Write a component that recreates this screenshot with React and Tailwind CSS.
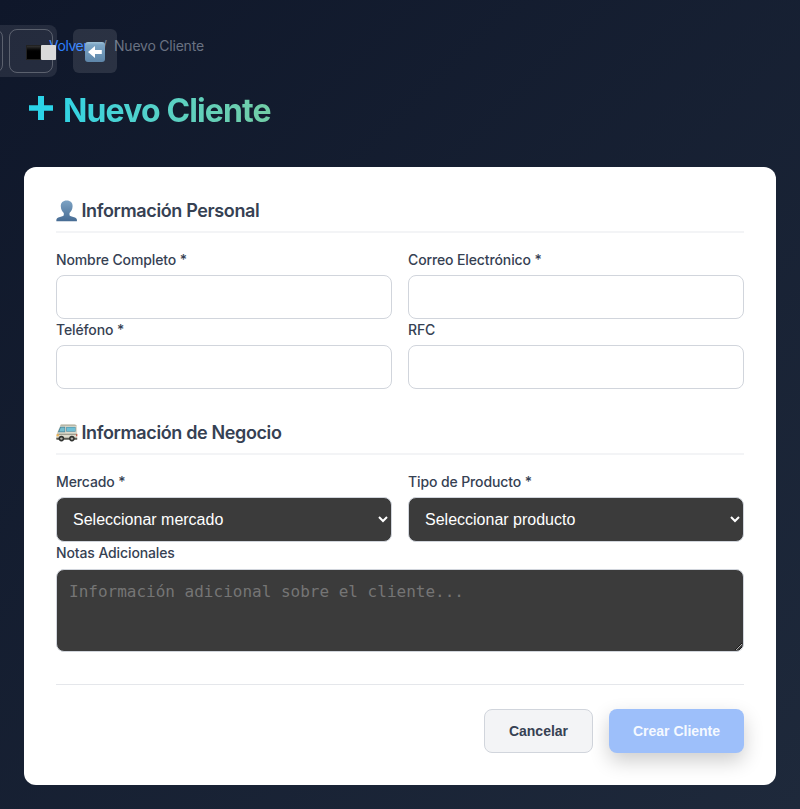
import React from "react";

function PersonIcon() {
  return (
    <svg className="mt-px block h-[22px] w-[22px]" viewBox="0 0 22 22">
      <defs>
        <linearGradient id="person" x1="0" y1="0" x2="0" y2="1">
          <stop offset="0" stopColor="#7da3c4" />
          <stop offset="1" stopColor="#466b93" />
        </linearGradient>
      </defs>
      <path
        fill="url(#person)"
        d="M10.700 .5c3.800 0 6 2.300 5.900 5.700-.1 3-1.500 5.500-3.100 6.800v1.700c0 .8.5 1.200 1.500 1.500 3.500.9 5.300 1.500 5.800 3 .2.600.2 1.500.1 2.100H.4c-.1-.6-.1-1.500.1-2.100.5-1.500 2.300-2.100 5.800-3 1-.3 1.500-.7 1.500-1.500V13C6.200 11.700 4.900 9.200 4.800 6.200 4.700 2.800 6.900.5 10.700.5z"
      />
    </svg>
  );
}

function VanIcon() {
  return (
    <svg className="mt-px block h-[22px] w-[22px]" viewBox="0 0 22 22">
      <path d="M4.700 2.500h13.500c1.900 0 2.700.9 2.800 2.400l.3 12.300H1c-.7 0-.8-.5-.7-1.500.1-2.600.6-5.100 1.500-6.600z" fill="#dddbcd" />
      <path d="M4.900 2.500h13.400c1.300 0 2 .5 2.400 1.500H4.200z" fill="#b9b7a7" />
      <path d="M4.200 4.800h5v5.500H1.900z" fill="#477f93" />
      <path d="M4.800 5.500h3.800v4H3.100z" fill="#75bccd" />
      <path d="M10.200 4.900h9.400v4.800h-9.400z" fill="#4d8fa5" />
      <path d="M10.800 5.500h8.200v3.600h-8.200z" fill="#70bfd5" />
      <path d="M1.200 11.800h20v1H1z" fill="#8a8a7d" />
      <path d="M.2 15.700h21v2H.5z" fill="#5c5c55" />
      <path d="M.6 12.300h2.200v1.900H.5z" fill="#f3b552" />
      <path d="M20.100 12.200h1.200v2h-1.200z" fill="#c94c37" />
      <circle cx="5.400" cy="16.600" r="2.800" fill="#30322f" />
      <circle cx="15.900" cy="16.600" r="2.800" fill="#30322f" />
      <circle cx="5.400" cy="16.600" r="1.200" fill="#b5b5ae" />
      <circle cx="15.900" cy="16.600" r="1.200" fill="#b5b5ae" />
    </svg>
  );
}

function ArrowIcon() {
  return (
    <svg className="block h-5 w-5" viewBox="0 0 20 20">
      <defs>
        <linearGradient id="tile" x1="0" y1="0" x2="0" y2="1">
          <stop offset="0" stopColor="#a0c2d8" />
          <stop offset=".15" stopColor="#7ca5c5" />
          <stop offset="1" stopColor="#5e86a9" />
        </linearGradient>
      </defs>
      <rect width="20" height="20" rx="3" fill="url(#tile)" />
      <path d="M3 10l7-6v4h6.800v4H10v4z" fill="#fff" />
    </svg>
  );
}

function PlusIcon() {
  return (
    <svg className="block h-6 w-6" viewBox="0 0 24 24">
      <path d="M9 0h6v9.200h9v5.600h-9V24H9v-9.200H0V9.200h9z" fill="#2bd3e8" />
    </svg>
  );
}

function Section({ icon, title, children }) {
  return (
    <section className="h-[222px]">
      <h2 className="flex h-[34px] items-start gap-[3.500px] border-b-2 border-gray-100 text-[18px] leading-6 font-semibold tracking-[-0.37px] text-gray-700">
        {icon}
        <span>{title}</span>
      </h2>
      <div className="grid grid-cols-2 gap-x-4 pt-4">{children}</div>
    </section>
  );
}

function Label({ children }) {
  return (
    <span className="mb-[5px] block h-[21px] text-[14px] leading-[21px] font-medium tracking-[-0.12px] text-gray-700">{children}</span>
  );
}

function TextField({ label }) {
  return (
    <label className="block">
      <Label>{label}</Label>
      <input className="block h-11 w-full rounded-lg border border-gray-300 bg-white px-4 text-gray-700" />
    </label>
  );
}

function SelectField({ label, placeholder }) {
  return (
    <label className="block">
      <Label>{label}</Label>
      <select className="block h-[45px] w-full rounded-lg border border-gray-300 bg-[#3b3b3b] px-3 font-['Liberation_Sans',Arial,sans-serif] text-[16px] text-white scheme-dark">
        <option>{placeholder}</option>
      </select>
    </label>
  );
}

export default function App() {
  return (
    <div className="relative h-[809px] w-full overflow-hidden bg-[linear-gradient(135deg,#0f172a_0%,#1e293b_100%)] px-6 font-[Inter,sans-serif]">
      <nav className="flex h-[92px] items-center pb-0.5 pl-[25px] text-[14px] tracking-[-0.2px] text-gray-500">
        <a className="w-[38px] tracking-[-0.75px] whitespace-nowrap text-blue-500">
          <span className="tracking-[-0.45px]">Volver</span>
        </a>
        <span className="w-[27px] pl-[15px]">/</span>
        <span className="tracking-[-0.22px]">Nuevo Cliente</span>
      </nav>

      <div className="absolute top-[25px] -left-[47px] flex h-[52px] w-[104px] items-center gap-1.5 rounded-lg bg-white/9 p-1">
        <div className="h-11 w-[46px] shrink-0 rounded-lg border border-white/25" />
        <div className="flex h-11 w-11 shrink-0 items-center rounded-lg border border-white/25 pt-0.5 pl-4">
          <span className="h-[15px] w-[15px] shrink-0 border border-[#222] bg-linear-to-b from-[#333] to-black to-50%" />
          <span className="h-[15px] w-[15px] shrink-0 rounded-[1px] bg-[#dadada]" />
        </div>
      </div>
      <div className="absolute top-[29px] left-[73px] flex h-11 w-11 items-center justify-center rounded-md bg-white/11 pt-0.5">
        <ArrowIcon />
      </div>

      <h1 className="flex h-[75px] items-start gap-[10px] pl-[5px] text-[32px] leading-9 font-bold">
        <span className="pt-1">
          <PlusIcon />
        </span>
        <span className="mt-px bg-linear-to-r from-[#31d3e3] to-[#72cda5] bg-clip-text tracking-[-0.87px] text-transparent">
          Nuevo Cliente
        </span>
      </h1>

      <main className="h-[618px] rounded-xl bg-white px-8 pt-8">
        <Section icon={<PersonIcon />} title="Información Personal">
          <TextField label="Nombre Completo *" />
          <TextField label="Correo Electrónico *" />
          <TextField label="Teléfono *" />
          <TextField label="RFC" />
        </Section>
        <Section icon={<VanIcon />} title="Información de Negocio">
          <SelectField label="Mercado *" placeholder="Seleccionar mercado" />
          <SelectField label="Tipo de Producto *" placeholder="Seleccionar producto" />
          <label className="col-span-2 block">
            <Label>Notas Adicionales</Label>
            <textarea
              className="mt-1.5 block h-[83px] w-full rounded-lg border border-gray-300 bg-[#3b3b3b] p-3 py-[10px] font-['DejaVu_Sans_Mono',monospace] text-[16px] leading-6 text-white scheme-dark placeholder:text-[#757575]"
              placeholder="Información adicional sobre el cliente..."
            />
          </label>
        </Section>
        <footer className="mt-[41px] flex justify-end gap-4 border-t border-gray-200 pt-6 font-['Liberation_Sans',Arial,sans-serif] text-[14px] font-bold">
          <button className="h-11 w-[109px] rounded-lg border border-gray-300 bg-gray-100 text-gray-700">Cancelar</button>
          <button className="h-11 w-[135px] rounded-lg bg-[#9dbffa] text-[#f5f9ff] shadow-[0_8px_20px_rgba(0,0,0,0.2)]">Crear Cliente</button>
        </footer>
      </main>
    </div>
  );
}
